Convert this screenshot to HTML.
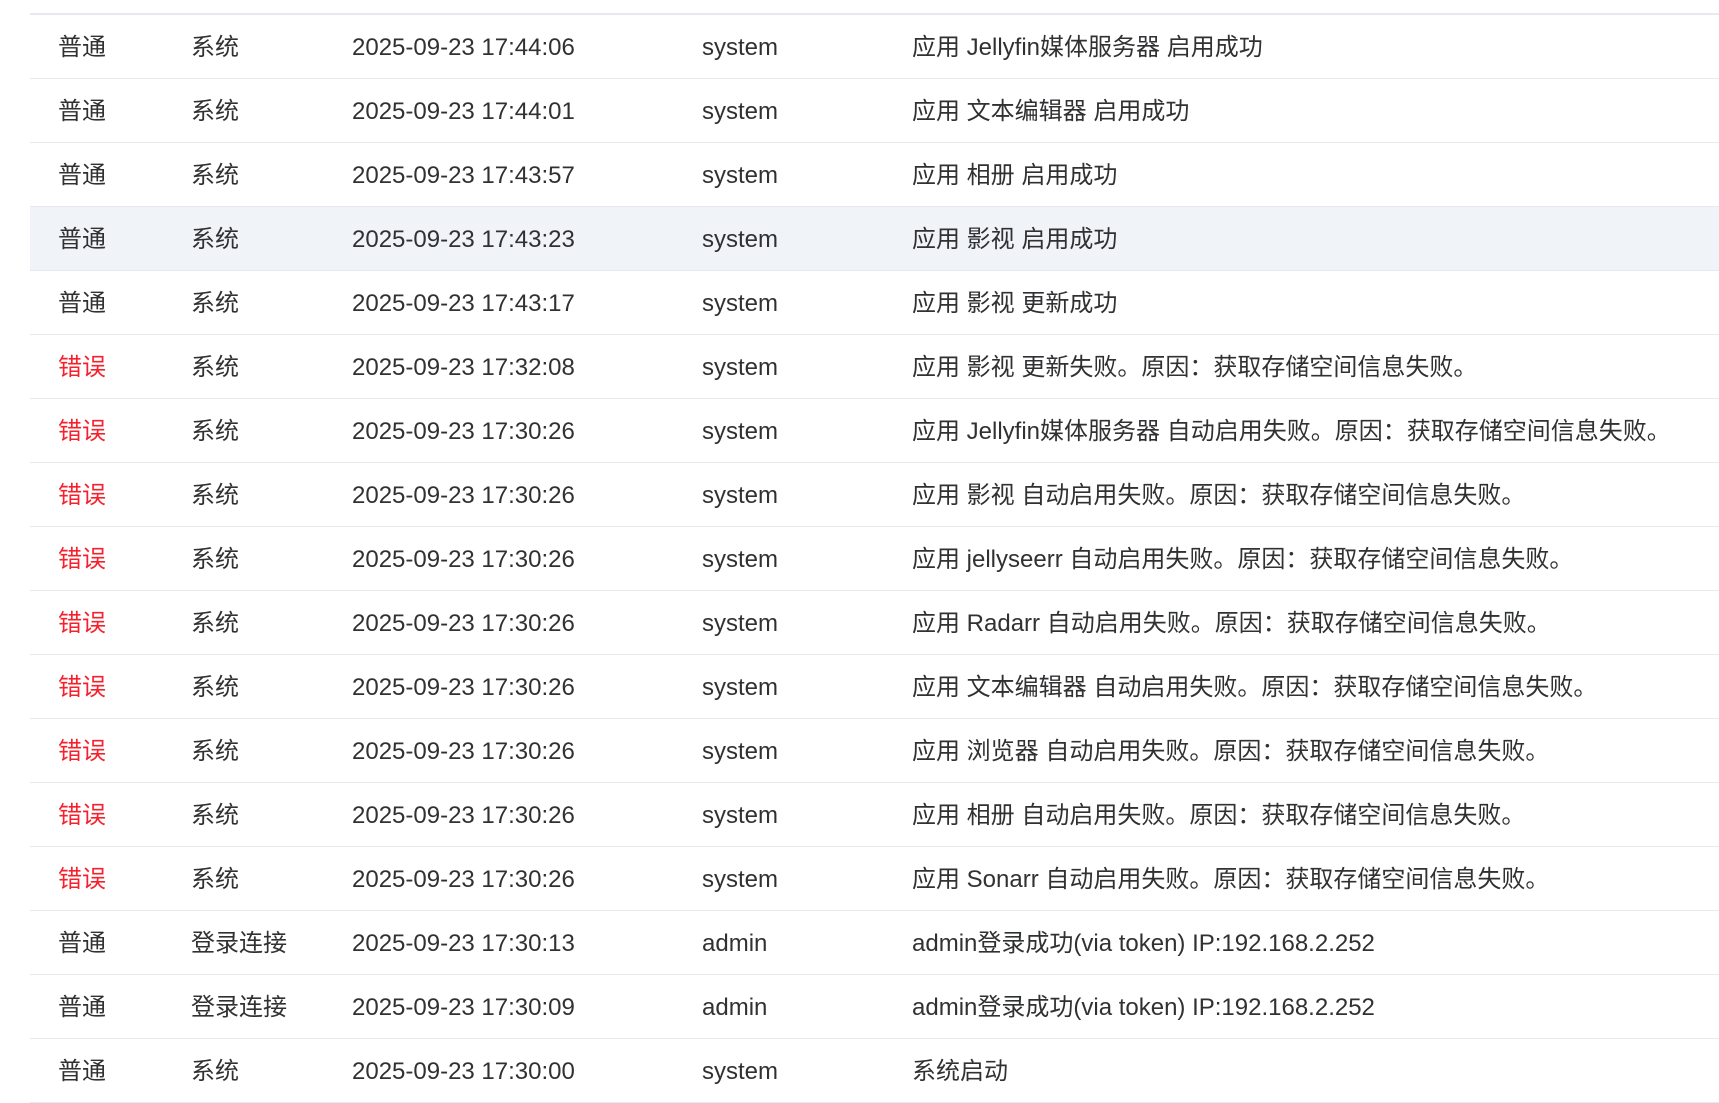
<!DOCTYPE html>
<html><head><meta charset="utf-8"><style>
html,body{margin:0;padding:0;background:#fff;width:1719px;height:1103px;overflow:hidden}
body{font-family:"Liberation Sans","Noto Sans CJK SC",sans-serif;font-size:24px;color:#303133}
.t{position:absolute;left:30px;top:13px;width:1689px;border-top:2px solid #e6e9ef}
.r{position:relative;height:63px;border-bottom:1px solid #e6e9ef}
.r.h{background:#f0f3f8}
.r span{position:absolute;top:1px;line-height:63px;white-space:nowrap}
.c1{left:28px}.c2{left:161px}.c3{left:322px}.c4{left:672px}.c5{left:882px}
.e{color:#f5222d}
</style></head><body><div class="t">
<div class="r"><span class="c1">普通</span><span class="c2">系统</span><span class="c3">2025-09-23 17:44:06</span><span class="c4">system</span><span class="c5">应用 Jellyfin媒体服务器 启用成功</span></div>
<div class="r"><span class="c1">普通</span><span class="c2">系统</span><span class="c3">2025-09-23 17:44:01</span><span class="c4">system</span><span class="c5">应用 文本编辑器 启用成功</span></div>
<div class="r"><span class="c1">普通</span><span class="c2">系统</span><span class="c3">2025-09-23 17:43:57</span><span class="c4">system</span><span class="c5">应用 相册 启用成功</span></div>
<div class="r h"><span class="c1">普通</span><span class="c2">系统</span><span class="c3">2025-09-23 17:43:23</span><span class="c4">system</span><span class="c5">应用 影视 启用成功</span></div>
<div class="r"><span class="c1">普通</span><span class="c2">系统</span><span class="c3">2025-09-23 17:43:17</span><span class="c4">system</span><span class="c5">应用 影视 更新成功</span></div>
<div class="r"><span class="c1 e">错误</span><span class="c2">系统</span><span class="c3">2025-09-23 17:32:08</span><span class="c4">system</span><span class="c5">应用 影视 更新失败。原因：获取存储空间信息失败。</span></div>
<div class="r"><span class="c1 e">错误</span><span class="c2">系统</span><span class="c3">2025-09-23 17:30:26</span><span class="c4">system</span><span class="c5">应用 Jellyfin媒体服务器 自动启用失败。原因：获取存储空间信息失败。</span></div>
<div class="r"><span class="c1 e">错误</span><span class="c2">系统</span><span class="c3">2025-09-23 17:30:26</span><span class="c4">system</span><span class="c5">应用 影视 自动启用失败。原因：获取存储空间信息失败。</span></div>
<div class="r"><span class="c1 e">错误</span><span class="c2">系统</span><span class="c3">2025-09-23 17:30:26</span><span class="c4">system</span><span class="c5">应用 jellyseerr 自动启用失败。原因：获取存储空间信息失败。</span></div>
<div class="r"><span class="c1 e">错误</span><span class="c2">系统</span><span class="c3">2025-09-23 17:30:26</span><span class="c4">system</span><span class="c5">应用 Radarr 自动启用失败。原因：获取存储空间信息失败。</span></div>
<div class="r"><span class="c1 e">错误</span><span class="c2">系统</span><span class="c3">2025-09-23 17:30:26</span><span class="c4">system</span><span class="c5">应用 文本编辑器 自动启用失败。原因：获取存储空间信息失败。</span></div>
<div class="r"><span class="c1 e">错误</span><span class="c2">系统</span><span class="c3">2025-09-23 17:30:26</span><span class="c4">system</span><span class="c5">应用 浏览器 自动启用失败。原因：获取存储空间信息失败。</span></div>
<div class="r"><span class="c1 e">错误</span><span class="c2">系统</span><span class="c3">2025-09-23 17:30:26</span><span class="c4">system</span><span class="c5">应用 相册 自动启用失败。原因：获取存储空间信息失败。</span></div>
<div class="r"><span class="c1 e">错误</span><span class="c2">系统</span><span class="c3">2025-09-23 17:30:26</span><span class="c4">system</span><span class="c5">应用 Sonarr 自动启用失败。原因：获取存储空间信息失败。</span></div>
<div class="r"><span class="c1">普通</span><span class="c2">登录连接</span><span class="c3">2025-09-23 17:30:13</span><span class="c4">admin</span><span class="c5">admin登录成功(via token) IP:192.168.2.252</span></div>
<div class="r"><span class="c1">普通</span><span class="c2">登录连接</span><span class="c3">2025-09-23 17:30:09</span><span class="c4">admin</span><span class="c5">admin登录成功(via token) IP:192.168.2.252</span></div>
<div class="r"><span class="c1">普通</span><span class="c2">系统</span><span class="c3">2025-09-23 17:30:00</span><span class="c4">system</span><span class="c5">系统启动</span></div>
</div></body></html>
